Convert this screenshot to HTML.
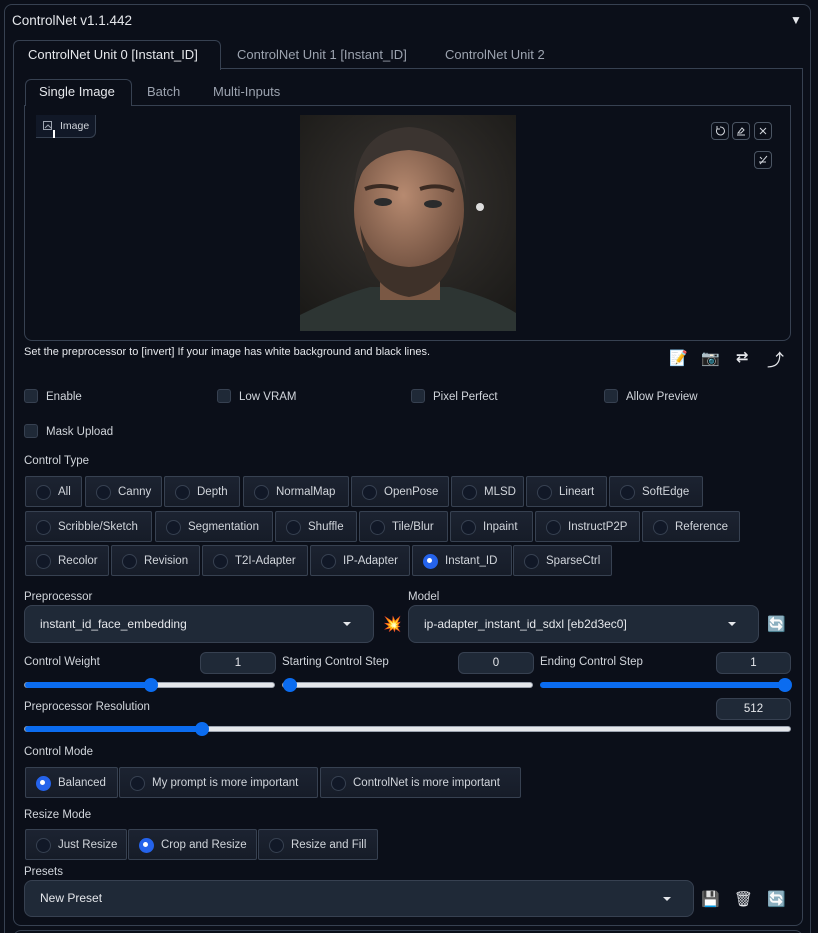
<!DOCTYPE html>
<html style="width:818px;height:933px;overflow:hidden"><head><meta charset="utf-8"><style>
*{box-sizing:border-box;margin:0;padding:0}
body{width:818px;height:933px;background:#0b0f19;font-family:"Liberation Sans","DejaVu Sans",sans-serif;color:#e5e7eb;position:relative;overflow:hidden;font-size:12px}
.a{position:absolute}
.t{position:absolute;white-space:nowrap}
.lbl{position:absolute;font-size:11.5px;color:#d1d5db;white-space:nowrap;margin-top:2px}
.r{position:absolute;height:31px;border:1px solid #374151;background:linear-gradient(#1c2331,#161c28);border-radius:2px;font-size:11.5px;color:#d1d5db;padding-left:32px;line-height:31px;white-space:nowrap}
.r::before{content:"";position:absolute;left:10px;top:8px;width:13px;height:13px;border-radius:50%;border:1px solid #374151;background:#111827}
.r.s::before{background:#2563eb;border-color:#2563eb}
.r.s::after{content:"";position:absolute;left:14px;top:12px;width:5px;height:5px;border-radius:50%;background:#fff}
.cb{position:absolute;width:14px;height:14px;border:1px solid #374151;background:#1f2937;border-radius:3px}
.dd{position:absolute;background:#1f2937;border:1px solid #374151;border-radius:8px;font-size:12px;color:#e5e7eb;padding-left:15px;white-space:nowrap}
.dd::after{content:"";position:absolute;right:22px;top:50%;margin-top:-2px;border-left:4px solid transparent;border-right:4px solid transparent;border-top:4px solid #e5e7eb}
.num{position:absolute;height:22px;background:#1f2937;border:1px solid #374151;border-radius:6px;font-size:11.5px;text-align:center;line-height:20px;color:#e5e7eb}
.sl{position:absolute;height:6px;border-radius:3px;background:#e5e7eb;border:1px solid #9ca3af}
.sl b{position:absolute;left:0;top:-1px;height:6px;border-radius:3px;background:#0b6cf0}
.sl i{position:absolute;top:-5px;width:14px;height:14px;border-radius:50%;background:#0b6cf0;margin-left:-7px}
.ib{position:absolute;width:18px;height:18px;border:1px solid #4b5563;border-radius:4px}
</style></head><body>
<div class="a" style="left:4px;top:4px;width:807px;height:940px;border:1px solid #374151;border-radius:8px"></div>
<div class="t" style="left:12px;top:13px;font-size:13.5px;color:#e5e7eb">ControlNet v1.1.442</div>
<div class="t" style="left:790px;top:13px;font-size:12px">▼</div>
<div class="a" style="left:13px;top:68px;width:790px;height:858px;border:1px solid #374151;border-radius:0 0 8px 8px"></div>
<div class="a" style="left:13px;top:40px;width:208px;height:30px;border:1px solid #374151;border-bottom:none;border-radius:6px 6px 0 0;background:#0b0f19"></div>
<div class="t" style="left:28px;top:47px;font-size:13px;color:#e5e7eb">ControlNet Unit 0 [Instant_ID]</div>
<div class="t" style="left:237px;top:47px;font-size:13px;color:#9ca3af">ControlNet Unit 1 [Instant_ID]</div>
<div class="t" style="left:445px;top:47px;font-size:13px;color:#9ca3af">ControlNet Unit 2</div>
<div class="a" style="left:24px;top:105px;width:767px;height:236px;border:1px solid #374151;border-radius:0 0 8px 8px"></div>
<div class="a" style="left:25px;top:79px;width:107px;height:27px;border:1px solid #374151;border-bottom:none;border-radius:6px 6px 0 0;background:#0b0f19"></div>
<div class="t" style="left:39px;top:84px;font-size:13px">Single Image</div>
<div class="t" style="left:147px;top:84px;font-size:13px;color:#9ca3af">Batch</div>
<div class="t" style="left:213px;top:84px;font-size:13px;color:#9ca3af">Multi-Inputs</div>
<div class="a" style="left:36px;top:115px;width:60px;height:23px;border:1px solid #374151;border-top:none;border-left:none;border-radius:0 0 6px 0;background:#111827"></div>
<svg class="a" style="left:43px;top:121px" width="10" height="10"><rect x="0.5" y="0.5" width="8" height="8" fill="none" stroke="#9ca3af"/><path d="M2 7 L5 4 L8 7" stroke="#9ca3af" fill="none"/></svg>
<div class="a" style="left:53px;top:130px;width:2px;height:8px;background:#fff"></div>
<div class="t" style="left:60px;top:120px;font-size:10.5px;color:#d1d5db">Image</div>
<svg class="a" style="left:300px;top:115px" width="216" height="216" viewBox="0 0 216 216">
<defs><radialGradient id="bg" cx="50%" cy="40%" r="70%"><stop offset="0" stop-color="#3a3632"/><stop offset="1" stop-color="#1b1a18"/></radialGradient>
<radialGradient id="sk" cx="45%" cy="40%" r="60%"><stop offset="0" stop-color="#b78a70"/><stop offset="1" stop-color="#6b4c3c"/></radialGradient></defs>
<rect width="216" height="216" fill="url(#bg)"/>
<path d="M0 216 L0 200 Q40 180 70 172 L150 172 Q190 182 216 198 L216 216Z" fill="#2d3533"/>
<rect x="80" y="140" width="60" height="45" fill="#7a5844"/>
<ellipse cx="109" cy="95" rx="55" ry="72" fill="url(#sk)"/>
<path d="M54 80 Q55 15 109 12 Q163 15 166 80 Q160 40 109 35 Q60 38 54 80Z" fill="#3b3430"/>
<path d="M60 110 Q65 175 109 182 Q155 175 160 110 Q150 150 109 152 Q70 150 60 110Z" fill="#3e3129"/>
<ellipse cx="83" cy="87" rx="9" ry="4" fill="#2a2b2c"/><ellipse cx="133" cy="89" rx="9" ry="4" fill="#2a2b2c"/>
<path d="M65 74 Q80 68 98 74 M120 74 Q138 68 154 76" stroke="#3a2a22" stroke-width="4" fill="none"/>
<circle cx="180" cy="92" r="4" fill="#ddd"/>
</svg>
<div class="ib" style="left:711px;top:122px"><svg width="16" height="16"><path d="M5 6 A4 4 0 1 0 8 4 M5 3 V6 H8" stroke="#d1d5db" fill="none"/></svg></div>
<div class="ib" style="left:732px;top:122px"><svg width="16" height="16"><path d="M5 10 L9 5 L11 7 L8 10Z M4 12 H12" stroke="#d1d5db" fill="none"/></svg></div>
<div class="ib" style="left:754px;top:122px"><svg width="16" height="16"><path d="M5 5 L11 11 M11 5 L5 11" stroke="#d1d5db" fill="none"/></svg></div>
<div class="ib" style="left:754px;top:151px"><svg width="16" height="16"><path d="M5 12 L12 4 M5 5 L7 7 M4 10 L11 10" stroke="#d1d5db" fill="none"/></svg></div>
<div class="t" style="left:24px;top:346px;font-size:11px;color:#e5e7eb">Set the preprocessor to [invert] If your image has white background and black lines.</div>
<div class="t" style="left:669px;top:349px;font-size:15px">📝</div>
<div class="t" style="left:701px;top:349px;font-size:15px">📷</div>
<div class="t" style="left:736px;top:348px;font-size:15px;font-weight:bold">⇄</div>
<div class="t" style="left:767px;top:346px;font-size:17px">⤴</div>
<div class="cb" style="left:24px;top:389px"></div><div class="lbl" style="left:46px;top:389px">Enable</div>
<div class="cb" style="left:217px;top:389px"></div><div class="lbl" style="left:239px;top:389px">Low VRAM</div>
<div class="cb" style="left:411px;top:389px"></div><div class="lbl" style="left:433px;top:389px">Pixel Perfect</div>
<div class="cb" style="left:604px;top:389px"></div><div class="lbl" style="left:626px;top:389px">Allow Preview</div>
<div class="cb" style="left:24px;top:424px"></div><div class="lbl" style="left:46px;top:424px">Mask Upload</div>
<div class="lbl" style="left:24px;top:453px">Control Type</div>
<div class="r" style="left:25px;top:476px;width:57px">All</div>
<div class="r" style="left:85px;top:476px;width:77px">Canny</div>
<div class="r" style="left:164px;top:476px;width:76px">Depth</div>
<div class="r" style="left:243px;top:476px;width:106px">NormalMap</div>
<div class="r" style="left:351px;top:476px;width:98px">OpenPose</div>
<div class="r" style="left:451px;top:476px;width:73px">MLSD</div>
<div class="r" style="left:526px;top:476px;width:81px">Lineart</div>
<div class="r" style="left:609px;top:476px;width:94px">SoftEdge</div>
<div class="r" style="left:25px;top:511px;width:127px">Scribble/Sketch</div>
<div class="r" style="left:155px;top:511px;width:118px">Segmentation</div>
<div class="r" style="left:275px;top:511px;width:82px">Shuffle</div>
<div class="r" style="left:359px;top:511px;width:89px">Tile/Blur</div>
<div class="r" style="left:450px;top:511px;width:83px">Inpaint</div>
<div class="r" style="left:535px;top:511px;width:105px">InstructP2P</div>
<div class="r" style="left:642px;top:511px;width:98px">Reference</div>
<div class="r" style="left:25px;top:545px;width:84px">Recolor</div>
<div class="r" style="left:111px;top:545px;width:89px">Revision</div>
<div class="r" style="left:202px;top:545px;width:106px">T2I-Adapter</div>
<div class="r" style="left:310px;top:545px;width:100px">IP-Adapter</div>
<div class="r s" style="left:412px;top:545px;width:100px">Instant_ID</div>
<div class="r" style="left:513px;top:545px;width:99px">SparseCtrl</div>
<div class="lbl" style="left:24px;top:589px">Preprocessor</div>
<div class="dd" style="left:24px;top:605px;width:350px;height:38px;line-height:36px">instant_id_face_embedding</div>
<div class="t" style="left:383px;top:615px;font-size:15px">💥</div>
<div class="lbl" style="left:408px;top:589px">Model</div>
<div class="dd" style="left:408px;top:605px;width:351px;height:38px;line-height:36px">ip-adapter_instant_id_sdxl [eb2d3ec0]</div>
<div class="t" style="left:767px;top:615px;font-size:15px">🔄</div>
<div class="lbl" style="left:24px;top:654px">Control Weight</div>
<div class="num" style="left:200px;top:652px;width:76px">1</div>
<div class="sl" style="left:24px;top:682px;width:251px"><b style="width:126px"></b><i style="left:126px"></i></div>
<div class="lbl" style="left:282px;top:654px">Starting Control Step</div>
<div class="num" style="left:458px;top:652px;width:76px">0</div>
<div class="sl" style="left:282px;top:682px;width:251px"><i style="left:7px"></i></div>
<div class="lbl" style="left:540px;top:654px">Ending Control Step</div>
<div class="num" style="left:716px;top:652px;width:75px">1</div>
<div class="sl" style="left:540px;top:682px;width:251px;background:#0b6cf0;border-color:#0b6cf0"><i style="left:244px"></i></div>
<div class="lbl" style="left:24px;top:699px">Preprocessor Resolution</div>
<div class="num" style="left:716px;top:698px;width:75px">512</div>
<div class="sl" style="left:24px;top:726px;width:767px"><b style="width:177px"></b><i style="left:177px"></i></div>
<div class="lbl" style="left:24px;top:744px">Control Mode</div>
<div class="r s" style="left:25px;top:767px;width:93px">Balanced</div>
<div class="r" style="left:119px;top:767px;width:199px">My prompt is more important</div>
<div class="r" style="left:320px;top:767px;width:201px">ControlNet is more important</div>
<div class="lbl" style="left:24px;top:807px">Resize Mode</div>
<div class="r" style="left:25px;top:829px;width:102px">Just Resize</div>
<div class="r s" style="left:128px;top:829px;width:129px">Crop and Resize</div>
<div class="r" style="left:258px;top:829px;width:120px">Resize and Fill</div>
<div class="lbl" style="left:24px;top:864px">Presets</div>
<div class="dd" style="left:24px;top:880px;width:670px;height:37px;line-height:35px">New Preset</div>
<div class="t" style="left:701px;top:890px;font-size:15px">💾</div>
<div class="t" style="left:734px;top:890px;font-size:15px">🗑</div>
<div class="t" style="left:767px;top:890px;font-size:15px">🔄</div>
<div class="a" style="left:13px;top:930px;width:790px;height:20px;border:1px solid #374151;border-radius:8px"></div>
</body></html>
